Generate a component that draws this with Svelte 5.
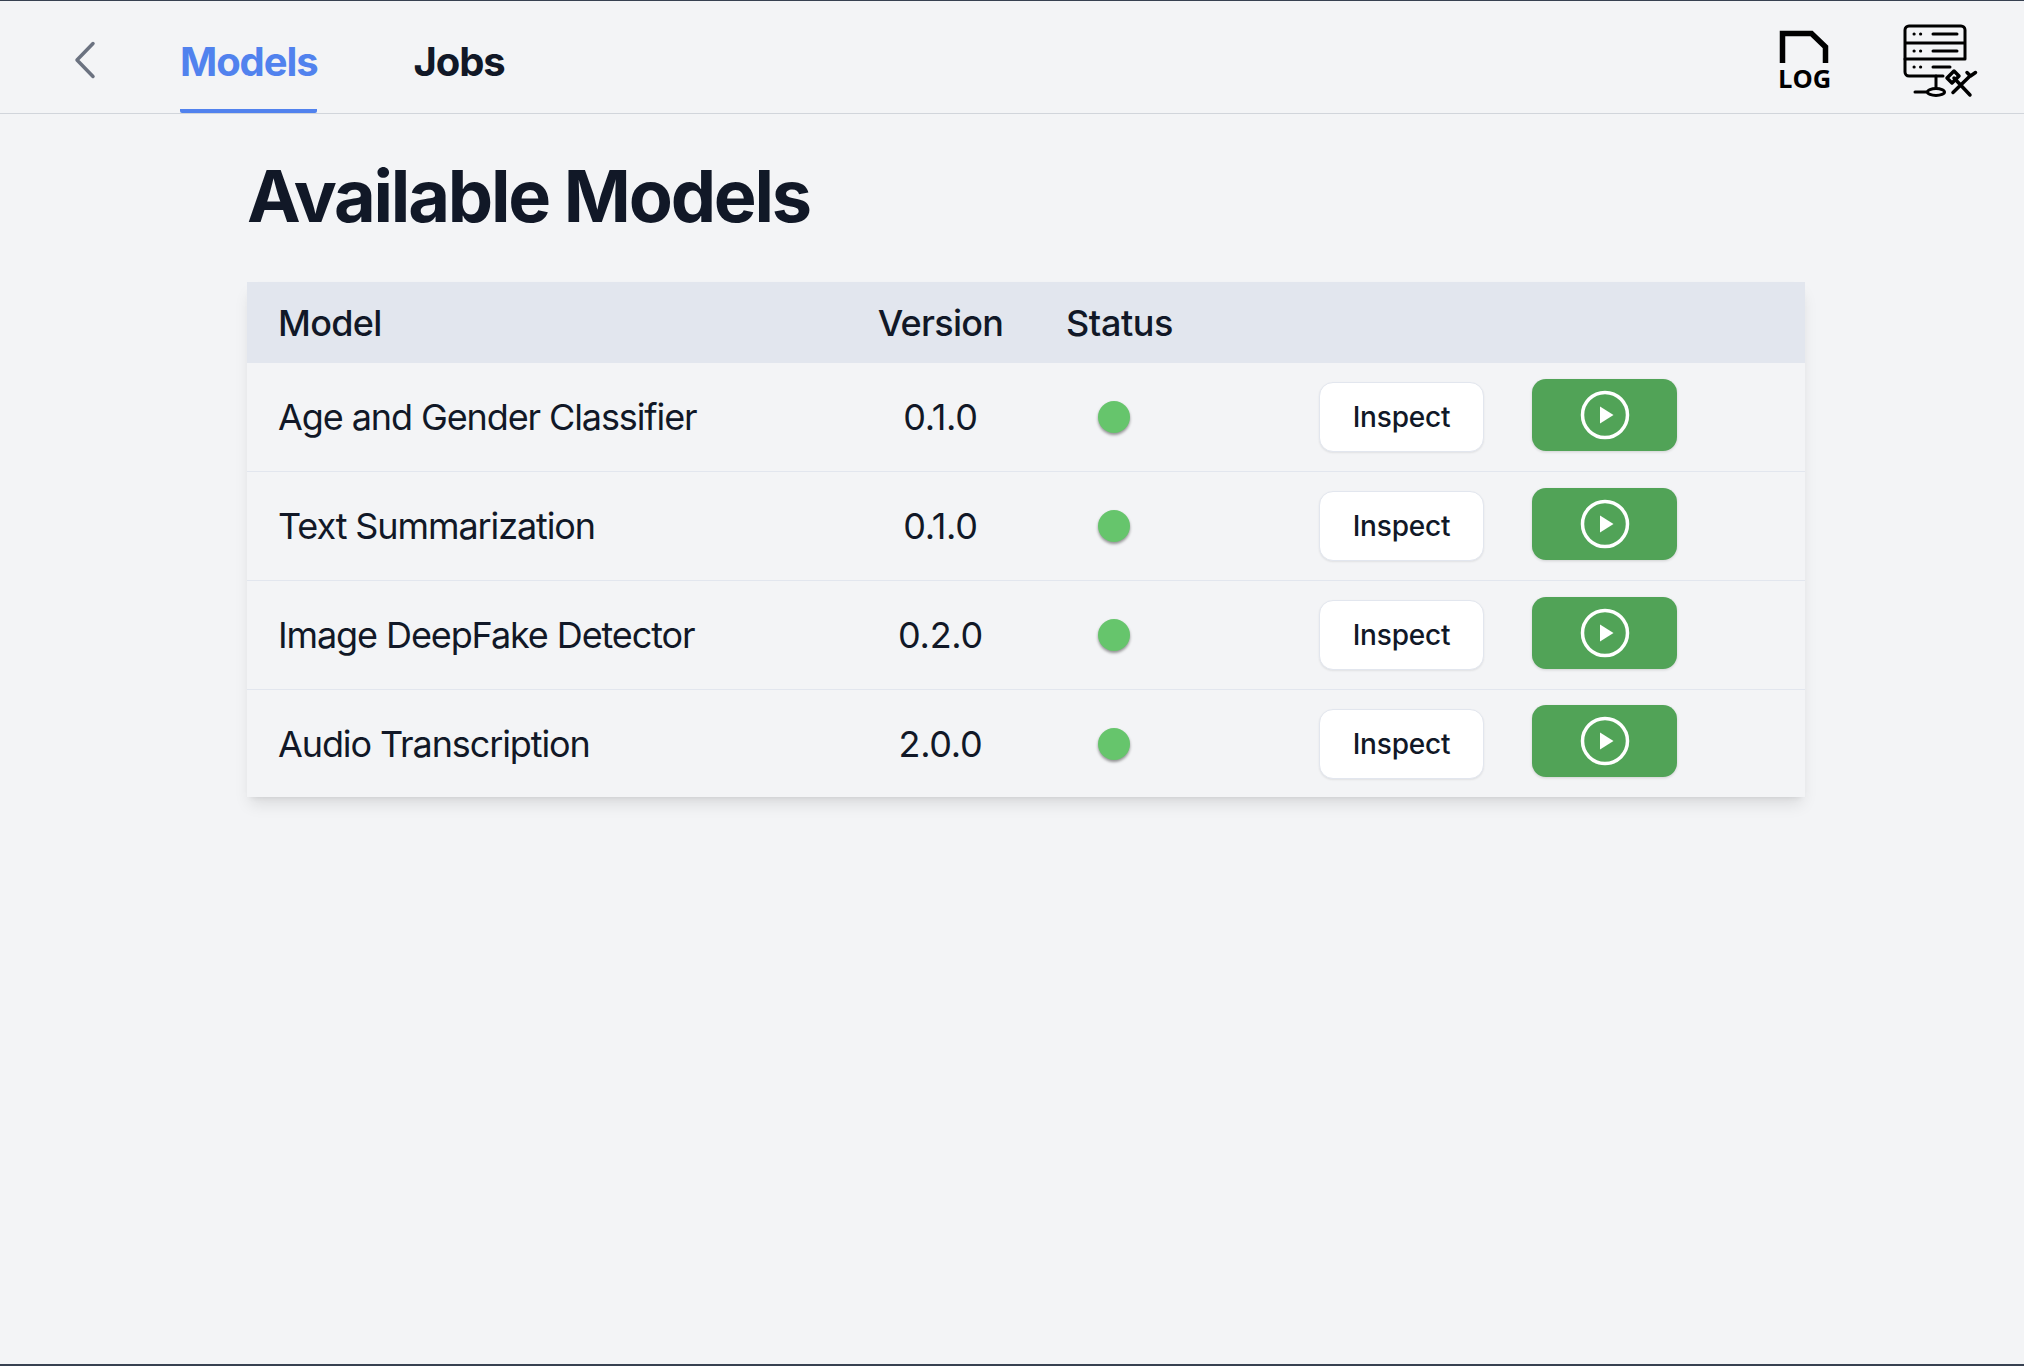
<script>
  const models = [
    { name: 'Age and Gender Classifier', version: '0.1.0' },
    { name: 'Text Summarization', version: '0.1.0' },
    { name: 'Image DeepFake Detector', version: '0.2.0' },
    { name: 'Audio Transcription', version: '2.0.0' }
  ];
</script>

<div class="page">
  <header class="topbar">
    <button class="back" aria-label="Back">
      <svg width="24" height="38" viewBox="0 0 24 38" fill="none">
        <path d="M20 2.500 4 19l16 16.500" stroke="#6b7280" stroke-width="3.500" stroke-linecap="round" stroke-linejoin="round" />
      </svg>
    </button>
    <nav class="tabs">
      <span class="tab active">Models</span>
      <span class="tab">Jobs</span>
    </nav>
    <div class="tools">
      <svg class="log" width="56" height="64" viewBox="0 0 56 64">
        <path d="M4.500 33V3.500h29L47.500 17v16" fill="none" stroke="#000" stroke-width="5.500" />
        <text x="0" y="58" fill="#000" font-family="Open Sans, sans-serif" font-weight="700" font-size="25.500">LOG</text>
      </svg>
      <svg class="server" width="80" height="80" viewBox="0 0 80 80" fill="none" stroke="#000" stroke-width="3" stroke-linecap="round" stroke-linejoin="round">
        <path d="M5 23V10a4 4 0 0 1 4-4h52a4 4 0 0 1 4 4v13M5 23h60M5 23v16M65 23v16M5 39h60" />
        <path d="M5 39v13a4 4 0 0 0 4 4h34" />
        <path d="M14 14h.2M20.500 14h.2M14 31h.2M20.500 31h.2M14 47h.2M20.500 47h.2M33 14h24M33 31h24M33 47h17" />
        <path d="M36 56v11M15 72h12" />
        <ellipse cx="36" cy="72" rx="8.500" ry="3.500" />
        <g stroke-width="3.500">
          <path d="M53 72.500 70 56M67 52.500l3.500 3.500 5-3.500M54 58l16 17" />
          <path d="m47 58 7-7 5 5-7 7z" />
        </g>
      </svg>
    </div>
  </header>

  <main class="content">
    <h1>Available Models</h1>
    <table>
      <thead>
        <tr>
          <th class="model">Model</th>
          <th class="version">Version</th>
          <th class="status">Status</th>
          <th class="actions"></th>
        </tr>
      </thead>
      <tbody>
        {#each models as m}
          <tr>
            <td class="model">{m.name}</td>
            <td class="version">{m.version}</td>
            <td class="status"><span class="dot"></span></td>
            <td class="actions">
              <div class="btns">
                <button class="inspect">Inspect</button>
                <button class="run" aria-label="Run {m.name}">
                  <svg width="50" height="50" viewBox="0 0 50 50" fill="none">
                    <circle cx="25" cy="25" r="22.500" stroke="#fff" stroke-width="3.500" />
                    <path d="M20 16.500v17L33.500 25z" fill="#fff" />
                  </svg>
                </button>
              </div>
            </td>
          </tr>
        {/each}
      </tbody>
    </table>
  </main>
</div>

<style>
  :global(body) {
    margin: 0;
    background: #f3f4f6;
  }

  .page {
    box-sizing: border-box;
    height: 1366px;
    border-top: 1px solid #374151;
    border-bottom: 2px solid #374151;
    background: #f3f4f6;
    font-family: Inter, "Liberation Sans", sans-serif;
    color: #111827;
  }

  .topbar {
    box-sizing: border-box;
    height: 113px;
    display: flex;
    align-items: stretch;
    border-bottom: 1px solid #d1d5db;
  }

  .back {
    background: none;
    border: 0;
    padding: 6px 0 0;
    margin-left: 73px;
    width: 107px;
    display: flex;
    align-items: center;
    justify-content: flex-start;
  }

  .tabs {
    display: flex;
    gap: 96px;
  }

  .tab {
    display: flex;
    align-items: center;
    font-size: 40px;
    font-weight: 700;
    letter-spacing: -1.100px;
    height: 112px;
    box-sizing: border-box;
    padding-top: 12px;
    border-bottom: 4px solid transparent;
    border-radius: 2px;
  }

  .tab.active {
    color: #5182ee;
    border-bottom-color: #5182ee;
  }

  .tools {
    margin-left: auto;
    display: flex;
    align-items: flex-start;
    gap: 66px;
    padding: 19px 44px 0 0;
  }

  .log {
    margin-top: 10px;
  }

  .content {
    padding: 0 219px 0 247px;
  }

  h1 {
    box-sizing: border-box;
    height: 168px;
    margin: 0;
    padding-top: 42px;
    font-size: 72px;
    line-height: 80px;
    font-weight: 700;
    letter-spacing: -2.200px;
  }

  table {
    width: 1558px;
    border-collapse: collapse;
    table-layout: fixed;
    background: #f3f4f6;
    box-shadow: 0 10px 15px -3px rgba(0, 0, 0, 0.1), 0 4px 6px -4px rgba(0, 0, 0, 0.1);
  }

  th {
    height: 81px;
    padding: 0;
    background: #e2e6ee;
    font-size: 36px;
    font-weight: 500;
    letter-spacing: -0.700px;
    text-align: left;
  }

  th.status {
    letter-spacing: -0.400px;
  }

  td {
    height: 108px;
    padding: 0;
    font-size: 36px;
    font-weight: 400;
    letter-spacing: -1.100px;
    border-bottom: 1px solid #e2e6ee;
  }

  td.version {
    letter-spacing: -0.300px;
  }

  tbody tr:last-child td {
    height: 107px;
    border-bottom: 0;
  }

  .model {
    width: 570px;
    padding-left: 31px;
    box-sizing: border-box;
  }

  .version {
    width: 247px;
    text-align: center;
  }

  .status {
    width: 200px;
    padding-left: 2px;
    box-sizing: border-box;
  }

  .dot {
    display: block;
    width: 32px;
    height: 32px;
    margin-left: 32px;
    border-radius: 50%;
    background: #66c56c;
    box-shadow: 0 2px 3px rgba(0, 0, 0, 0.4);
  }

  .btns {
    display: flex;
    align-items: center;
    gap: 48px;
    padding-left: 55px;
  }

  .inspect {
    box-sizing: border-box;
    width: 165px;
    height: 70px;
    background: #fff;
    border: 1px solid #e2e6ee;
    border-radius: 14px;
    font-family: inherit;
    font-size: 28px;
    font-weight: 500;
    letter-spacing: -0.200px;
    color: #111827;
    box-shadow: 0 1px 2px rgba(0, 0, 0, 0.08);
  }

  .run {
    width: 145px;
    height: 72px;
    margin-top: -5px;
    background: #51a357;
    border: 0;
    border-radius: 14px;
    padding: 0;
    display: flex;
    align-items: center;
    justify-content: center;
    box-shadow: 0 1px 3px rgba(0, 0, 0, 0.15);
  }
</style>
